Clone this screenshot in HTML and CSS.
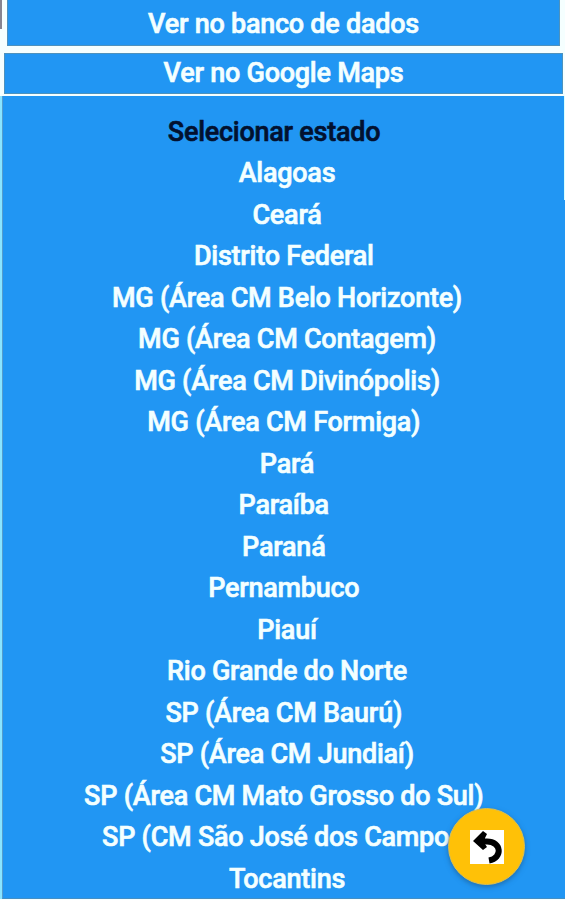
FILE: index.html
```html
<!DOCTYPE html>
<html lang="pt-BR">
<head>
<meta charset="utf-8">
<title>Selecionar estado</title>
<link rel="stylesheet" href="styles.css">
</head>
<body>
<main class="screen">
  <div class="top"><button class="action action-db">Ver no banco de dados</button></div>
  <button class="action action-maps">Ver no Google Maps</button>
  <section class="panel">
    <ul class="states">
      <li class="heading">Selecionar estado&nbsp;&nbsp;&nbsp;&nbsp;</li>
      <li>Alagoas</li>
      <li>Ceará</li>
      <li>Distrito Federal&nbsp;</li>
      <li>MG (Área CM Belo Horizonte)</li>
      <li>MG (Área CM Contagem)</li>
      <li>MG (Área CM Divinópolis)</li>
      <li>MG (Área CM Formiga)&nbsp;</li>
      <li>Pará</li>
      <li>Paraíba&nbsp;</li>
      <li>Paraná&nbsp;</li>
      <li>Pernambuco&nbsp;</li>
      <li>Piauí</li>
      <li>Rio Grande do Norte</li>
      <li>SP (Área CM Baurú)&nbsp;</li>
      <li>SP (Área CM Jundiaí)</li>
      <li>SP (Área CM Mato Grosso do Sul)&nbsp;</li>
      <li>SP (CM São José dos Campos)</li>
      <li>Tocantins</li>
    </ul>
  </section>
  <button class="back" aria-label="Voltar">
    <svg class="back-icon" viewBox="0 0 34 34">
      <rect width="34" height="34" fill="#fff"/>
      <path d="M9 11.5H17C31.500 11.500 33 28 19 30.500" fill="none" stroke="#000" stroke-width="6"/>
      <path d="M3 11L13 1L17 4L15 8V14L17 17L13 20Z" fill="#000"/>
    </svg>
  </button>
</main>
</body>
</html>
```

FILE: styles.css
```css
* { box-sizing: border-box; }
body {
  margin: 0;
  background: #f5ffff;
  font-family: Roboto, "Liberation Sans", sans-serif;
  font-size: 27px;
  font-weight: 500;
  letter-spacing: -0.25px;
  -webkit-text-stroke: 0.6px currentColor;
  color: #f4ffff;
}
.screen {
  position: relative;
  height: 900px;
  overflow: hidden;
  display: flex;
  flex-direction: column;
}
button { font: inherit; letter-spacing: inherit; color: inherit; border: 0; padding: 0; }
.top {
  height: 46px;
  padding: 0 5px 0 7px;
  background: linear-gradient(#858592, #858592) 0 0 / 2px 29px no-repeat;
}
.action { background: #2196f3; border: 1px solid #4d92bd; }
.action-db { width: 100%; height: 46px; border-top: 0; padding-top: 3px; }
.action-maps { height: 41px; margin: 7px 2px 2px 4px; padding: 0 0 2px; }
.panel {
  height: 803px;
  margin-left: 2px;
  padding: 15.6px 0 0 6px;
  background: linear-gradient(#d9ffff, #d9ffff) 100% 0 / 1px 104px no-repeat, #2196f3;
  border-left: 1px solid #559ccc;
  border-bottom: 1px solid #438fc5;
  box-shadow: -2px 0 #8ae4ff;
}
.states { margin: 0; padding: 0; list-style: none; }
.states li {
  height: 41.53px;
  line-height: 41.53px;
  text-align: center;
  white-space: nowrap;
}
.states .heading { color: #02112f; }
.back {
  position: absolute;
  left: 448px;
  top: 808px;
  width: 77px;
  height: 77px;
  display: grid;
  place-items: center;
  border-radius: 50%;
  background: #ffc107;
  border: 1px solid #d9bf55;
  box-shadow: 0 2px 5px #1c558699;
}
.back-icon { width: 34px; height: 34px; }
```
